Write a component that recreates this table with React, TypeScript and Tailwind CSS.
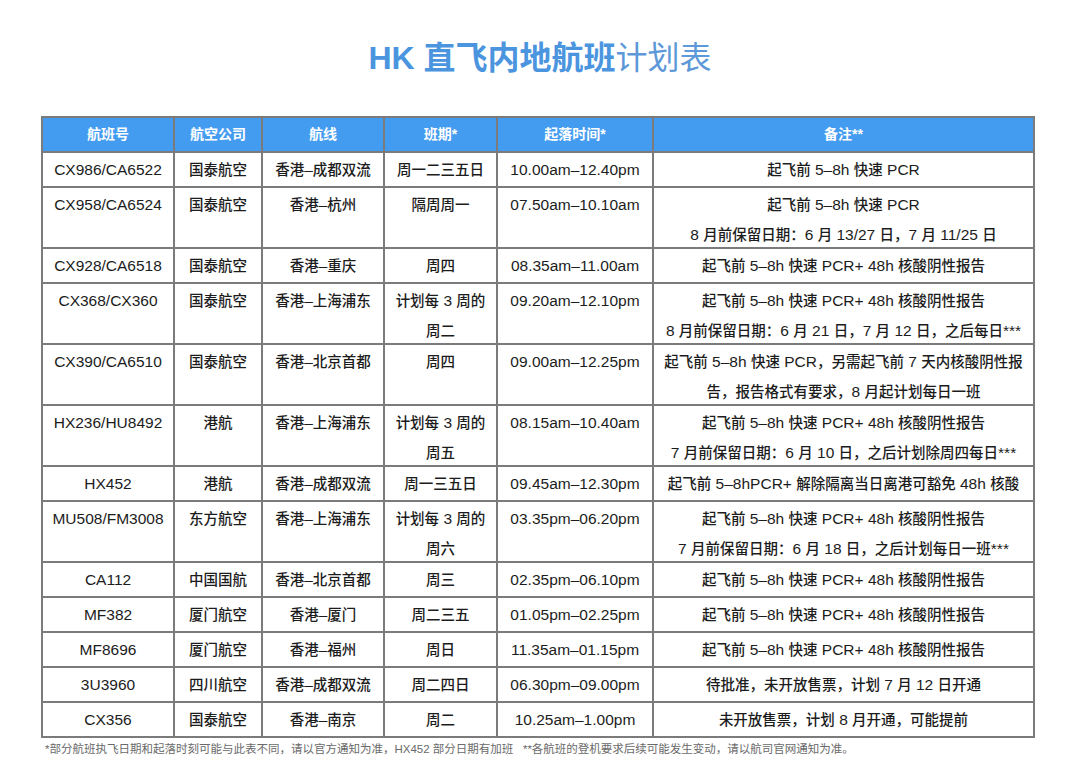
import React from "react";

type Row = {
  no: string;
  air: string;
  route: string;
  days: string[];
  time: string;
  note: string[];
  h: "s" | "d";
};

const P = "起飞前 5–8h 快速 PCR+ 48h 核酸阴性报告";

const rows: Row[] = [
  { no: "CX986/CA6522", air: "国泰航空", route: "香港–成都双流", days: ["周一二三五日"], time: "10.00am–12.40pm", note: ["起飞前 5–8h 快速 PCR"], h: "s" },
  { no: "CX958/CA6524", air: "国泰航空", route: "香港–杭州", days: ["隔周周一"], time: "07.50am–10.10am", note: ["起飞前 5–8h 快速 PCR", "8 月前保留日期：6 月 13/27 日，7 月 11/25 日"], h: "d" },
  { no: "CX928/CA6518", air: "国泰航空", route: "香港–重庆", days: ["周四"], time: "08.35am–11.00am", note: [P], h: "s" },
  { no: "CX368/CX360", air: "国泰航空", route: "香港–上海浦东", days: ["计划每 3 周的", "周二"], time: "09.20am–12.10pm", note: [P, "8 月前保留日期：6 月 21 日，7 月 12 日，之后每日***"], h: "d" },
  { no: "CX390/CA6510", air: "国泰航空", route: "香港–北京首都", days: ["周四"], time: "09.00am–12.25pm", note: ["起飞前 5–8h 快速 PCR，另需起飞前 7 天内核酸阴性报", "告，报告格式有要求，8 月起计划每日一班"], h: "d" },
  { no: "HX236/HU8492", air: "港航", route: "香港–上海浦东", days: ["计划每 3 周的", "周五"], time: "08.15am–10.40am", note: [P, "7 月前保留日期：6 月 10 日，之后计划除周四每日***"], h: "d" },
  { no: "HX452", air: "港航", route: "香港–成都双流", days: ["周一三五日"], time: "09.45am–12.30pm", note: ["起飞前 5–8hPCR+ 解除隔离当日离港可豁免 48h 核酸"], h: "s" },
  { no: "MU508/FM3008", air: "东方航空", route: "香港–上海浦东", days: ["计划每 3 周的", "周六"], time: "03.35pm–06.20pm", note: [P, "7 月前保留日期：6 月 18 日，之后计划每日一班***"], h: "d" },
  { no: "CA112", air: "中国国航", route: "香港–北京首都", days: ["周三"], time: "02.35pm–06.10pm", note: [P], h: "s" },
  { no: "MF382", air: "厦门航空", route: "香港–厦门", days: ["周二三五"], time: "01.05pm–02.25pm", note: [P], h: "s" },
  { no: "MF8696", air: "厦门航空", route: "香港–福州", days: ["周日"], time: "11.35am–01.15pm", note: [P], h: "s" },
  { no: "3U3960", air: "四川航空", route: "香港–成都双流", days: ["周二四日"], time: "06.30pm–09.00pm", note: ["待批准，未开放售票，计划 7 月 12 日开通"], h: "s" },
  { no: "CX356", air: "国泰航空", route: "香港–南京", days: ["周二"], time: "10.25am–1.00pm", note: ["未开放售票，计划 8 月开通，可能提前"], h: "s" },
];

const headers = ["航班号", "航空公司", "航线", "班期*", "起落时间*", "备注**"];

// Split text into runs of Latin (ASCII + dash) and CJK so Latin can be set slightly larger
function Mixed({ text }: { text: string }) {
  const parts = text.match(/[\u0020-\u007e\u2013]+|[^\u0020-\u007e\u2013]+/g) || [];
  return (
    <>
      {parts.map((p, i) =>
        /^[\u0020-\u007e\u2013]+$/.test(p) ? (
          <span key={i} className="text-[15.5px]">
            {p}
          </span>
        ) : (
          <span key={i}>{p}</span>
        )
      )}
    </>
  );
}

function Cell({ lines, tall }: { lines: string[]; tall: boolean }) {
  return (
    <div
      className={
        "bg-white flex flex-col items-center pt-[2px] text-[14.5px] font-medium leading-[30px] text-[#1c1c1c] whitespace-nowrap overflow-hidden " +
        (tall ? "h-[59px]" : "h-[33px]")
      }
    >
      {lines.map((l, i) => (
        <div key={i}>
          <Mixed text={l} />
        </div>
      ))}
    </div>
  );
}

export default function App() {
  return (
    <div
      className="w-[1080px] h-[762px] bg-white overflow-hidden"
      style={{ fontFamily: '"Liberation Sans", "Noto Sans CJK SC", sans-serif' }}
    >
      <div className="pt-[38px] h-[78px] flex justify-center">
        <div className="text-[32px] leading-[40px] whitespace-nowrap">
          <span className="font-bold text-[#4b95df]">HK 直飞内地航班</span>
          <span className="text-[#5d98d8]">计划表</span>
        </div>
      </div>
      <div className="mt-[38px] ml-[41px] w-[994px] bg-[#7b7b7b] p-[2px]">
        <div className="grid grid-cols-[130px_86px_120px_111px_154px_379px] gap-[2px]">
          {headers.map((h) => (
            <div
              key={h}
              className="h-[33px] bg-[#449cf1] flex items-center justify-center text-white font-bold text-[14px]"
            >
              {h}
            </div>
          ))}
          {rows.map((r) => {
            const tall = r.h === "d";
            return (
              <React.Fragment key={r.no}>
                <Cell lines={[r.no]} tall={tall} />
                <Cell lines={[r.air]} tall={tall} />
                <Cell lines={[r.route]} tall={tall} />
                <Cell lines={r.days} tall={tall} />
                <Cell lines={[r.time]} tall={tall} />
                <Cell lines={r.note} tall={tall} />
              </React.Fragment>
            );
          })}
        </div>
      </div>
      <div className="ml-[45px] mt-[3px] text-[11.5px] leading-[16px] text-[#6a6a6a] whitespace-nowrap">
        *部分航班执飞日期和起落时刻可能与此表不同，请以官方通知为准，HX452 部分日期有加班&nbsp;&nbsp;&nbsp;**各航班的登机要求后续可能发生变动，请以航司官网通知为准。
      </div>
    </div>
  );
}
